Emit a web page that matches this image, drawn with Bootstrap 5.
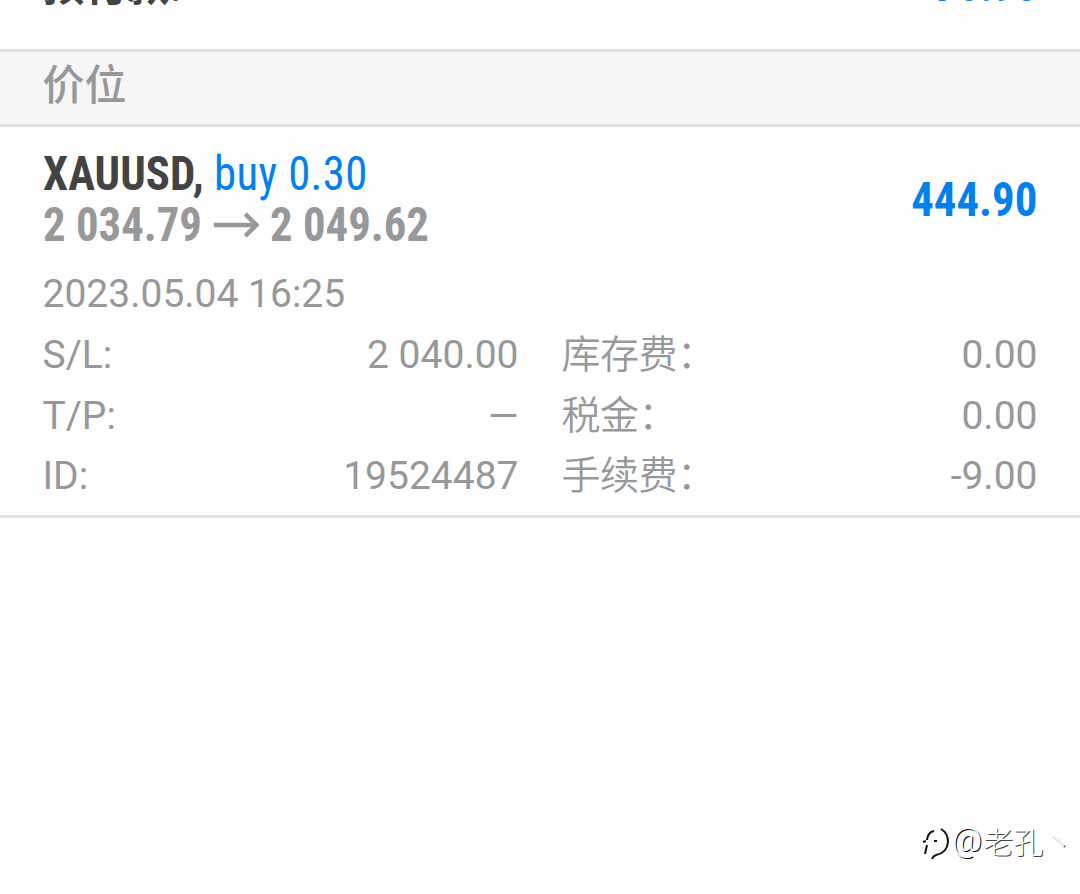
<!DOCTYPE html>
<html lang="zh-CN">
<head>
    <meta charset="UTF-8" />
    <title>XAUUSD</title>
    <link href="https://cdn.jsdelivr.net/npm/bootstrap@5.3.2/dist/css/bootstrap.min.css" rel="stylesheet" />
    <style>
        body { font-family: Roboto, "Noto Sans CJK SC", sans-serif; font-size: 39px; line-height: 60.4px; color: #97989a; background: #fefefe; white-space: nowrap; overflow: hidden; }
        .screen { height: 894px; }
        .edge { padding-left: 42.5px; padding-right: 42.5px; }
        .cond { font-family: "Roboto Condensed", Roboto, "Noto Sans CJK SC", sans-serif; font-size: 48px; line-height: 51px; transform: scaleX(.932); transform-origin: left; }
        .cond.amount { transform-origin: right; }
        .blue { color: #0180ee; }
        .margin-row { height: 49px; }
        .margin-row > .label { margin-top: -43px; font-size: 42px; letter-spacing: .4px; color: #434343; }
        .margin-row > .amount { margin-top: -41px; }
        .section-title { height: 78px; border-top: 3px solid #e2e2e2; border-bottom: 3px solid #e2e2e2; background: #f6f6f6; font-size: 42px; font-weight: 500; line-height: 68px; }
        .deal { height: 391px; padding-top: 21px; border-bottom: 3px solid #e2e2e2; }
        .symbol { color: #434343; letter-spacing: .1px; }
        .side { font-weight: 450; letter-spacing: .4px; }
        .arrow { width: 50px; height: 26px; margin: 0 11px 0 12px; }
        .time { margin-top: 14px; }
        .details { margin-top: 1px; column-gap: 43px; }
        .details .left { width: 476px; }
        .light { font-weight: 350; letter-spacing: -.5px; }
        .watermark { left: 922px; top: 810px; font-family: "Noto Sans CJK SC", sans-serif; font-size: 30px; font-weight: 300; line-height: 60px; color: #fff; text-shadow: 1px 1px 0 #444; }
        .watermark .logo { margin-top: 8px; }
        .watermark .at { margin: 0 1px 0 2px; font-family: Roboto, sans-serif; font-size: 33px; text-shadow: 1px 1px 0 #000; }
    </style>
</head>
<body>
    <div class="screen position-relative d-flex flex-column">
        <div class="margin-row edge d-flex justify-content-between">
            <b class="label">预付款:</b>
            <b class="cond amount blue">76.90</b>
        </div>

        <div class="section-title edge">价位</div>

        <div class="deal edge">
            <div class="d-flex justify-content-between align-items-center">
                <div class="cond">
                    <div><b class="symbol">XAUUSD,</b> <span class="side blue">buy 0.30</span></div>
                    <div class="d-flex align-items-center fw-bold">
                        <span>2 034.79</span>
                        <svg class="arrow" viewBox="0 0 50 26" fill="none" stroke="currentColor" stroke-width="4.5"><path d="M0 13H47M34 2L46 13L34 24" /></svg>
                        <span>2 049.62</span>
                    </div>
                </div>
                <b class="cond amount blue">444.90</b>
            </div>
            <div class="time">2023.05.04 16:25</div>
            <div class="details d-flex">
                <div class="left">
                    <div class="d-flex justify-content-between"><span>S/L:</span><span>2 040.00</span></div>
                    <div class="d-flex justify-content-between"><span>T/P:</span><span>—</span></div>
                    <div class="d-flex justify-content-between"><span>ID:</span><span>19524487</span></div>
                </div>
                <div class="flex-fill">
                    <div class="d-flex justify-content-between"><span class="light">库存费：</span><span>0.00</span></div>
                    <div class="d-flex justify-content-between"><span class="light">税金：</span><span>0.00</span></div>
                    <div class="d-flex justify-content-between"><span class="light">手续费：</span><span>-9.00</span></div>
                </div>
            </div>
        </div>

        <div class="watermark position-absolute d-flex align-items-center">
            <svg class="logo" width="28" height="34" viewBox="0 0 28 34" fill="none" stroke="#111" stroke-width="2"><path d="M12 4Q6 5 5 13M1 15L4 14M5 18L3 27M12 14H15M19 2Q26 6 26 15Q25 26 14 28Q11 29 10 32" /></svg>
            <span class="at">@</span>
            <span>老孔丶</span>
        </div>
    </div>
    <script src="https://cdn.jsdelivr.net/npm/bootstrap@5.3.2/dist/js/bootstrap.bundle.min.js"></script>
</body>
</html>
